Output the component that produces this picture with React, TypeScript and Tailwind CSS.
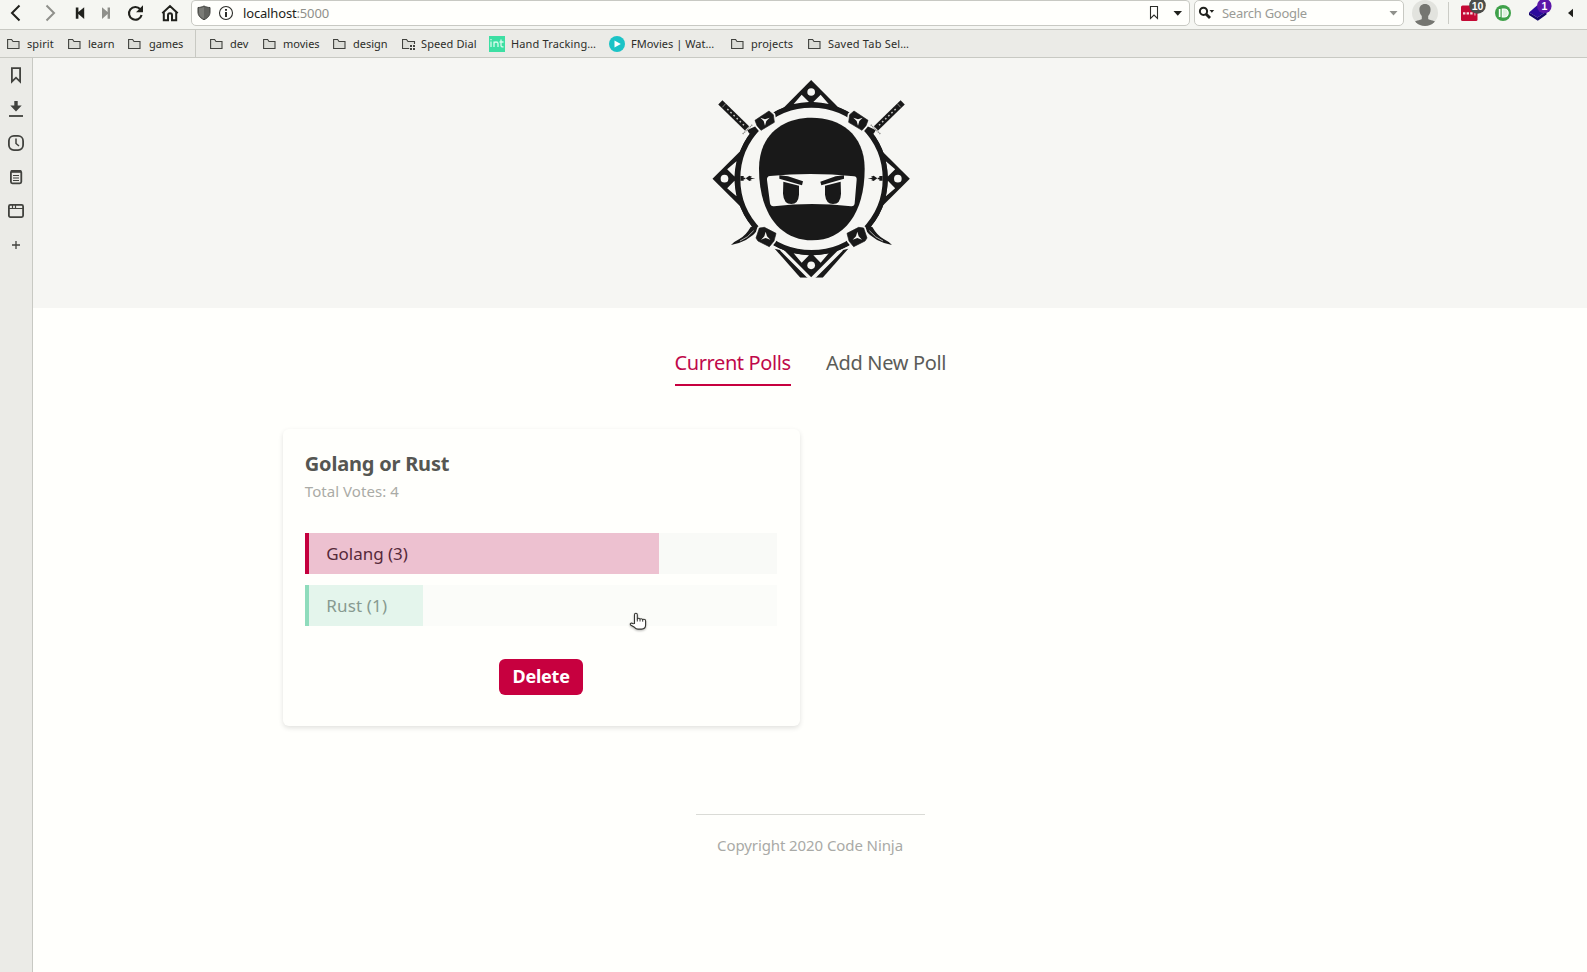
import type { ReactNode } from "react";

const INK = "#20211d";

function Slot({ x, w, children, className = "" }: { x: number; w: number; children?: ReactNode; className?: string }) {
  return (
    <svg width={w} height={29} viewBox={`${x} 0 ${w} 29`} className={`shrink-0 overflow-visible ${className}`}>
      {children}
    </svg>
  );
}

function NavButtons() {
  return (
    <>
      <Slot x={0} w={34}>
        <path d="M19.5 5.5 12 13l7.5 7.5" fill="none" stroke={INK} strokeWidth="2" />
      </Slot>
      <Slot x={34} w={34}>
        <path d="M46.5 5.5 54 13l-7.5 7.5" fill="none" stroke="#8f908b" strokeWidth="2" />
      </Slot>
      <Slot x={68} w={26}>
        <path d="M75.8 7.5h2.6v4.6l5.8-4.8v11.6l-5.8-4.8v4.6h-2.6z" fill={INK} />
      </Slot>
      <Slot x={94} w={26}>
        <path d="M110 7.5h-2.4v4.6L102 7.3v11.6l5.6-4.8v4.6h2.4z" fill="#8f908b" />
      </Slot>
      <Slot x={120} w={32}>
        <path d="M140.3 9.2A6.4 6.4 0 1 0 141.6 15" fill="none" stroke={INK} strokeWidth="2.1" />
        <path d="M143 5.3v7h-7z" fill={INK} />
      </Slot>
      <Slot x={152} w={39}>
        <path d="M162.3 13.2 170 6l7.7 7.2M163.8 12v8.2h4.2v-5a2 2 0 0 1 4 0v5h4.2V12" fill="none" stroke={INK} strokeWidth="2" />
      </Slot>
    </>
  );
}

function Toolbar() {
  return (
    <div className="flex h-[30px] shrink-0 border-b border-[#c8c9c3] bg-[#f5f6f2]">
      <NavButtons />
      <div className="flex h-[26px] w-[999px] shrink-0 items-center rounded-b-[5px] rounded-t-[4px] border border-[#c8c9c3] bg-[#fffffc]">
        <svg width="51" height="24" viewBox="192 1 51 24" className="shrink-0">
          <path d="M204 6c2 1 4 1.500 6 1.500v4.500c0 3.500-2 6-6 7.700-4-1.700-6-4.200-6-7.700V7.500c2 0 4-.5 6-1.500z" fill="#62635f" stroke="#41423e" strokeWidth="1" />
          <path d="M204 7v11.800c-3.300-1.500-5-3.800-5-6.800V8.300c1.800 0 3.500-.4 5-1.300z" fill="#7a7b76" />
          <circle cx="226" cy="13" r="6.500" fill="none" stroke="#2c2d29" strokeWidth="1.100" />
          <path d="M225 9h2v1.700h-2zM225 11.900h2v5h-2z" fill="#2c2d29" />
        </svg>
        <span className="grow text-[13px] leading-6 tracking-[-0.16px] text-[#1d1e1a]">
          localhost<span className="text-[#8f908b]">:5000</span>
        </span>
        <svg width="47" height="24" viewBox="1142 1 47 24" className="shrink-0">
          <path d="M1150.500 6.500h7v12l-3.500-3.500-3.500 3.500z" fill="none" stroke="#2c2d29" strokeWidth="1.100" />
          <path d="M1173.500 11h8.500l-4.250 4.700z" fill={INK} />
        </svg>
      </div>
      <div className="ml-1 flex h-[26px] w-[210px] shrink-0 items-center rounded-[5px] border border-[#c8c9c3] bg-[#fffffc]">
        <svg width="27" height="24" viewBox="1195 1 27 24" className="shrink-0">
          <circle cx="1203.500" cy="11.300" r="3.600" fill="none" stroke={INK} strokeWidth="2" />
          <path d="m1206 14 4 4" stroke={INK} strokeWidth="2.800" />
          <path d="M1209.500 10h4.700l-2.350 2.700z" fill={INK} />
        </svg>
        <span className="grow text-[13px] leading-6 tracking-[-0.27px] text-[#9a9b96]">Search Google</span>
        <svg width="20" height="24" viewBox="1383 1 20 24" className="shrink-0">
          <path d="M1389.500 11h8l-4 4.600z" fill="#8f908b" />
        </svg>
      </div>
      <Slot x={1404} w={44}>
        <clipPath id="avatar">
          <circle cx="1425" cy="13" r="13" />
        </clipPath>
        <g clipPath="url(#avatar)">
          <path d="M1412 0h26v26h-26z" fill="#e2e3de" />
          <path d="M1425 4c3.700 0 5.600 2.300 5.600 5.600 0 3-1 5-2.400 6.400v3c1 1.200 8 1.500 8 4V26h-22.400v-3c0-2.500 7-2.800 8-4v-3c-1.400-1.400-2.400-3.400-2.400-6.400 0-3.300 1.900-5.600 5.600-5.600z" fill="#757671" />
        </g>
      </Slot>
      <div className="mt-0.5 h-[22px] w-px shrink-0 bg-[#cbccc6]" />
      <Slot x={1449} w={40} className="font-['Liberation_Sans',sans-serif] font-bold">
        <rect x="1461" y="5.500" width="16.500" height="15.500" rx="1.500" fill="#c40a35" />
        <path d="M1463 12.200h2.400v2.300h-2.400zM1466.600 12.200h2.400v2.300h-2.400zM1470.200 12.200h2.400v2.300h-2.400zM1474.500 11.500h.9v4h-.9z" fill="#f6dfe4" />
        <circle cx="1477.500" cy="5.500" r="8.300" fill="#4c4d4a" />
        <text x="1477.500" y="9.700" textAnchor="middle" fontSize="10.500" fill="#fff">10</text>
      </Slot>
      <Slot x={1489} w={28}>
        <circle cx="1503" cy="13" r="8" fill="#3fa14a" />
        <path d="M1498.800 9h1.700v8h-1.700z" fill="#fff" />
        <path d="M1502.300 9h1.900a4 4 0 0 1 0 8h-1.900z" fill="#dff0df" stroke="#fff" strokeWidth="1.200" />
      </Slot>
      <Slot x={1517} w={43} className="font-['Liberation_Sans',sans-serif] font-bold">
        <path d="m1529 12.500 8-7 9.500 6-9 6z" fill="#2b0a9c" />
        <path d="m1529 12.500 8.500 5 9-6v3l-8.700 6.200-8.800-5.700z" fill="#16066b" />
        <circle cx="1544.300" cy="6" r="7.300" fill="#5b17a8" />
        <text x="1544.300" y="9.900" textAnchor="middle" fontSize="10.500" fill="#fff">1</text>
      </Slot>
      <Slot x={1560} w={27}>
        <path d="M1573 8.700v8.600l-5-4.300z" fill={INK} />
      </Slot>
    </div>
  );
}

function Folder({ dial = false }: { dial?: boolean }) {
  return (
    <svg width="16" height="16" viewBox="0 0 16 16" className="shrink-0">
      <path d={dial ? "M7.500 12.500h-7v-9h4l1.500 2h6.500V8" : "M.6 3.500h4l1.400 2h6v7H.6z"} fill="#dcddd8" stroke="#41423e" strokeWidth="1.100" />
      {dial && <path d="M7.500 8.500h6v6h-6z" fill="#ebebe7" />}
      {dial && <path d="M8 9h2v2H8zM11 9h2v2h-2zM8 12h2v2H8zM11 12h2v2h-2z" fill="#41423e" />}
    </svg>
  );
}

function Bookmark({ label, className, icon }: { label: string; className: string; icon?: ReactNode }) {
  return (
    <div className={`flex shrink-0 items-center whitespace-nowrap ${className}`}>
      {icon ?? <Folder />}
      <span>{label}</span>
    </div>
  );
}

const IntIcon = (
  <svg width="16" height="16" viewBox="0 0 16 16" className="shrink-0">
    <path d="M0 0h16v16H0z" fill="#3ddfa3" />
    <path d="M2 5.500V11M2 3v1.200M5 11V5.500M5 7.500q0-1.500 2-1.500t2 1.500V11M12 3.500V9.500q0 1.500 2.500 1.300M10.500 6h4" fill="none" stroke="#d7fbec" strokeWidth="1.300" />
  </svg>
);

const PlayIcon = (
  <svg width="16" height="16" viewBox="0 0 16 16" className="shrink-0">
    <circle cx="8" cy="8" r="8" fill="#1bc3c6" />
    <path d="M5.500 4.500 11.800 8l-6.300 3.500z" fill="#fff" />
  </svg>
);

function BookmarksBar() {
  return (
    <div className="flex h-7 shrink-0 items-center border-b border-[#c8c9c3] bg-[#ebebe7] pl-[7px] text-[11px] leading-4 text-[#2c2d29]">
      <Bookmark label="spirit" className="w-[61px] gap-1 tracking-[0.1px]" />
      <Bookmark label="learn" className="w-[60px] gap-1" />
      <Bookmark label="games" className="w-[67px] gap-[5px] tracking-[-0.1px]" />
      <div className="h-[27px] w-px shrink-0 bg-[#c8c9c3]" />
      <Bookmark label="dev" className="ml-3.5 w-[53px] gap-1" />
      <Bookmark label="movies" className="w-[70px] gap-1" />
      <Bookmark label="design" className="w-[69px] gap-1" />
      <Bookmark label="Speed Dial" className="w-[87px] gap-[3px] tracking-[0.1px]" icon={<Folder dial />} />
      <Bookmark label="Hand Tracking…" className="w-[120px] gap-1.5 tracking-[0.15px]" icon={IntIcon} />
      <Bookmark label="FMovies | Wat…" className="w-[122px] gap-1.5 tracking-[0.05px]" icon={PlayIcon} />
      <Bookmark label="projects" className="w-[77px] gap-1 tracking-[0.1px]" />
      <Bookmark label="Saved Tab Sel…" className="gap-1 tracking-[0.2px]" />
    </div>
  );
}

function SideIcon({ children }: { children: ReactNode }) {
  return (
    <svg width="32" height="34" viewBox="0 0 32 34" fill="none" stroke="#41423e" strokeWidth="1.800" className="shrink-0">
      {children}
    </svg>
  );
}

function SidePanel() {
  return (
    <aside className="flex w-[33px] shrink-0 flex-col border-r border-[#c8c9c3] bg-[#ebebe7]">
      <SideIcon>
        <path d="M11.900 10.200h8.200v13.400L16 19.700l-4.100 3.900z" />
      </SideIcon>
      <SideIcon>
        <path d="M14.300 9h3.400v4.500h4L16 19.500l-5.700-6h4z" fill="#41423e" stroke="none" />
        <path d="M9 24h14" />
      </SideIcon>
      <SideIcon>
        <rect x="8.900" y="9.900" width="14.200" height="14.200" rx="5" />
        <path d="M16 12.500v5l3 2.500" strokeWidth="1.500" />
      </SideIcon>
      <SideIcon>
        <rect x="10.900" y="10.900" width="10.400" height="12.400" rx="1.500" />
        <path d="M11 11.500h10" strokeWidth="2.600" />
        <path d="M13 15.500h6M13 18h6M13 20.500h6" strokeWidth="1.100" />
      </SideIcon>
      <SideIcon>
        <rect x="8.900" y="10.900" width="14.200" height="12.200" rx="1.500" />
        <path d="M9 14.500h14M12.500 11v3.500M15.500 11v3.500" strokeWidth="1.200" />
      </SideIcon>
      <SideIcon>
        <path d="M16 13v8M12 17h8" strokeWidth="1.300" />
      </SideIcon>
    </aside>
  );
}

const BG = "#f6f6f3";
const BLACK = "#191919";

function Spike() {
  return (
    <>
      <path d="M333.500 30 428 125H239z" fill={BLACK} />
      <circle cx="333.500" cy="66" r="11.500" fill={BG} />
      <path d="M305 74l22 22q-24 1-46 6zM362 74l-22 22q24 1 46 6z" fill={BG} />
    </>
  );
}

function Nut({ d, cx, cy, up = false }: { d: string; cx: number; cy: number; up?: boolean }) {
  return (
    <>
      <path d={d} fill={BLACK} stroke={BG} strokeWidth="12" strokeLinejoin="round" />
      <path d={d} fill={BLACK} stroke={BLACK} strokeWidth="2" />
      <g transform={up ? `translate(${cx} ${cy}) scale(1 -1)` : `translate(${cx} ${cy})`}>
        <path d="M-14-8 0-3 14-8 4 2 0 16-4 2z" fill={BG} />
      </g>
    </>
  );
}

function LeftSword() {
  return (
    <>
      <path d="M61 97 141 175" stroke={BLACK} strokeWidth="18" />
      <path d="M82 117 134 168" stroke="#c9c9c6" strokeWidth="4.500" strokeDasharray="5 8" />
      <path d="M67 112 77 101" stroke={BG} strokeWidth="1.500" />
      <path d="M128 192 158 163" stroke="#8b8b88" strokeWidth="4" strokeDasharray="4 2" />
      <path d="M142 181q10-6 13-7l12-5 10 10-12 15q-9-7-17-3z" fill={BLACK} />
      <path d="M152 471 164 468 174 480Q144 516 93 525 100 516 118 507 138 496 152 471z" fill={BLACK} />
      <path d="M161 482Q144 503 120 513" fill="none" stroke={BG} strokeWidth="2" />
      <path d="M224 536 243 541 324 623H301z" fill={BLACK} />
      <path d="M242 540 326 624" stroke={BG} strokeWidth="5" />
      <path d="M121 318h10v14h-10zM131 323h5v5h-5zM137 325l11-8 8 3-5 3 15 2-15 3 5 2-8 3z" fill={BLACK} />
      <Nut d="M165 151 207 123 220 134 223 157 183 181 171 167z" cx={195} cy={151} />
      <Nut d="M168 504 178 474 193 472 228 490 222 513 208 530 174 513z" cx={197} cy={501} up />
    </>
  );
}

function NinjaLogo() {
  return (
    <svg width="220" height="220" viewBox="0 0 660 660" className="mt-3">
      <clipPath id="crop">
        <path d="M0 0h660v623H0z" />
      </clipPath>
      <g clipPath="url(#crop)">
        <circle cx="334.500" cy="326.500" r="221" fill="none" stroke={BLACK} strokeWidth="16" />
        <Spike />
        <g transform="rotate(90 333.500 326)"><Spike /></g>
        <g transform="rotate(180 333.500 326)"><Spike /></g>
        <g transform="rotate(270 333.500 326)"><Spike /></g>
        <circle cx="334.500" cy="326.500" r="221" fill={BG} stroke={BLACK} strokeWidth="15" />
        <LeftSword />
        <g transform="translate(669 0) scale(-1 1)"><LeftSword /></g>
        <path d="M335 143C250 143 177 192 177 296 177 430 240 511 336 511 432 511 494 430 494 296 494 192 420 143 335 143z" fill={BLACK} />
        <path d="M210 318Q335 306 462 319 471 320 470 329L464 400Q463 410 453 409 335 395 222 409 212 410 210 400L201 330Q200 319 210 318z" fill={BG} />
        <path d="M238 316 264 319 309 334 306 346 238 326zM432 316 407 319 361 335 364 346 432 326z" fill={BLACK} />
        <path d="M250 335 297 347V374q-2 28-23 28-23 0-25-31zM422 335 375 347V374q3 28 24 28 23 0 24-31z" fill={BLACK} />
      </g>
    </svg>
  );
}

interface Answer {
  label: string;
  votes: number;
  edge: string;
  fill: string;
  text: string;
  track: string;
}

const ANSWERS: Answer[] = [
  { label: "Golang", votes: 3, edge: "border-[#c4003e]", fill: "bg-[#edc1d0]", text: "text-[#56293a] tracking-[-0.05px]", track: "bg-[#f9faf7]" },
  { label: "Rust", votes: 1, edge: "border-[#8fdcbc]", fill: "bg-[#e4f5ec]", text: "text-[#879a90] tracking-[0.15px]", track: "bg-[#fbfcf9]" },
];

function PointerCursor() {
  return (
    <svg width="20" height="20" viewBox="0 0 20 20" className="absolute left-[324.500px] top-[27px] z-10 drop-shadow-[0_1px_1px_rgba(0,0,0,0.3)]">
      <path
        d="M5.500 11.500V2.800q0-1.500 1.400-1.500t1.400 1.500V7q.3-.8 1.300-.8 1.200 0 1.400 1.100.3-.6 1.300-.6 1.200 0 1.400 1.100.3-.5 1.200-.5 1.700 0 1.700 1.800v4q0 4-4 4H9q-2 0-3.500-1.800L1.600 13q-.8-1.300.3-1.800 1-.4 2 .5z"
        fill="#fff"
        stroke="#363733"
        strokeWidth="1.100"
        strokeLinejoin="round"
      />
      <path d="M8.300 7v2.500M11 7.500v2M13.700 8v1.700" stroke="#363733" strokeWidth="1" />
    </svg>
  );
}

function PollCard() {
  const total = ANSWERS.reduce((sum, a) => sum + a.votes, 0);
  return (
    <article className="h-[297px] rounded-[6px] bg-[#fffffc] pl-[21.8px] pr-[22.6px] pt-[21px] shadow-[0_2px_5px_rgba(0,0,0,0.12)]">
      <h3 className="text-[20px] font-bold leading-7 tracking-[-0.2px] text-[#555652]">Golang or Rust</h3>
      <p className="mt-px text-[15px] leading-6 tracking-[0.05px] text-[#aaaba6]">Total Votes: {total}</p>
      <div className="mt-[30px] flex flex-col gap-[11px]">
        {ANSWERS.map((a, i) => (
          <div key={a.label} className={`relative flex h-[41px] ${a.track}`}>
            <div
              className={`flex items-center whitespace-nowrap border-l-4 pl-[17.500px] text-[17px] leading-6 ${a.edge} ${a.fill} ${a.text}`}
              style={{ width: `${(a.votes / total) * 100}%` }}
            >
              {a.label} ({a.votes})
            </div>
            {i === 1 && <PointerCursor />}
          </div>
        ))}
      </div>
      <div className="mt-[33px] flex justify-center">
        <button className="flex h-9 w-[84px] justify-center rounded-[6px] bg-[#c7003f] pt-px text-[18px] font-bold leading-8 tracking-[-0.25px] text-white">Delete</button>
      </div>
    </article>
  );
}

export default function App() {
  return (
    <div className="flex h-[972px] w-[1587px] flex-col overflow-hidden bg-[#fffffc] font-['Noto_Sans',sans-serif]">
      <Toolbar />
      <BookmarksBar />
      <div className="flex min-h-0 grow">
        <SidePanel />
        <div className="flex grow flex-col">
          <header className="flex h-[250px] justify-center bg-[#f6f6f3]">
            <NinjaLogo />
          </header>
          <main className="mx-auto w-[1054px]">
            <nav className="flex justify-center gap-[35px] pt-[41px] text-[20px] leading-7">
              <a className="h-[37px] w-[116px] whitespace-nowrap border-b-2 border-[#c7003f] tracking-[-0.4px] text-[#c0084a]">Current Polls</a>
              <a className="w-[120px] whitespace-nowrap pl-[0.5px] tracking-[-0.33px] text-[#5b5c58]">Add New Poll</a>
            </nav>
            <div className="mt-[43px] grid grid-cols-2 gap-5">
              <PollCard />
            </div>
          </main>
          <footer className="mx-auto mt-[88px] w-[229px] border-t border-[#dadbd6] pt-[18px] text-center text-[15px] leading-6 tracking-[-0.09px] text-[#a9aaa6]">
            Copyright 2020 Code Ninja
          </footer>
        </div>
      </div>
    </div>
  );
}
